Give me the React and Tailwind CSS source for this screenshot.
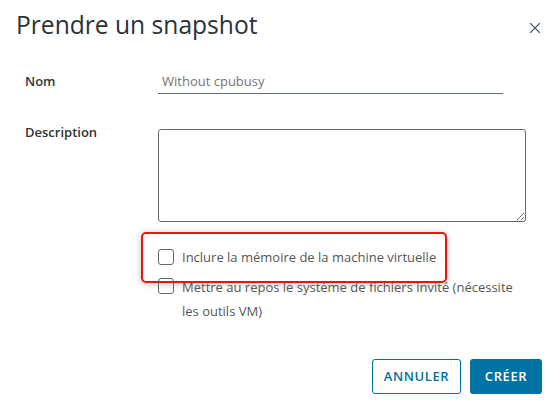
import { X } from "lucide-react";

export default function App() {
  return (
    <div
      className="w-[555px] h-[405px] bg-white text-[#313131] overflow-hidden"
      style={{ fontFamily: "'Open Sans', sans-serif" }}
    >
      <header className="flex items-start justify-between pl-[16px] pr-[11px] pt-[8px]">
        <h1 className="text-[24.6px] leading-[34px] font-normal text-[#2b3238]">
          Prendre un snapshot
        </h1>
        <button className="mt-[11px] text-[#4f5b63]">
          <X size={18} strokeWidth={1.5} />
        </button>
      </header>

      <div className="mt-[27px] grid grid-cols-[133px_1fr] pl-[25px] pr-[29px]">
        <label className="text-[13px] leading-[24px] font-semibold text-[#333]">
          Nom
        </label>
        <div className="pr-[23px]">
          <div className="border-b border-[#5f7079] pl-[4px] text-[13px] leading-[24px] text-[#757575]">
            Without cpubusy
          </div>
        </div>

        <label className="mt-[26px] text-[13px] leading-[24px] font-semibold text-[#333]">
          Description
        </label>
        <textarea className="mt-[35px] h-[93px] w-full rounded-[3px] border border-[#6a6a6a] resize-y" />
      </div>

      <div className="ml-[141px] mt-[10px] flex flex-col">
        <div className="w-[306px] rounded-[5px] border-2 border-[#ee1111] shadow-[0_1px_6px_rgba(0,0,0,0.25)] pl-[15px] pt-[13px] pb-[14px]">
          <label className="flex items-center gap-[8px] text-[13px] leading-[20px] text-[#565656]">
            <span className="w-[16px] h-[16px] rounded-[3px] border border-[#666] shrink-0" />
            Inclure la mémoire de la machine virtuelle
          </label>
        </div>
        <label className="-mt-[8px] pl-[17px] flex items-start gap-[8px] text-[13px] leading-[24px] text-[#565656]">
          <span className="mt-[3px] w-[16px] h-[16px] rounded-[3px] border border-[#666] shrink-0" />
          <span className="w-[340px]">Mettre au repos le système de fichiers invité (nécessite les outils VM)</span>
        </label>
      </div>

      <div className="mt-[36px] flex justify-end gap-[9px] pr-[13px]">
        <button className="h-[35px] w-[89px] rounded-[3px] border border-[#0072a3] text-[#0072a3] text-[13px] font-semibold tracking-[0.6px]">
          ANNULER
        </button>
        <button className="h-[35px] w-[72px] rounded-[3px] bg-[#0072a3] text-white text-[13px] font-semibold tracking-[0.6px]">
          CRÉER
        </button>
      </div>
    </div>
  );
}
